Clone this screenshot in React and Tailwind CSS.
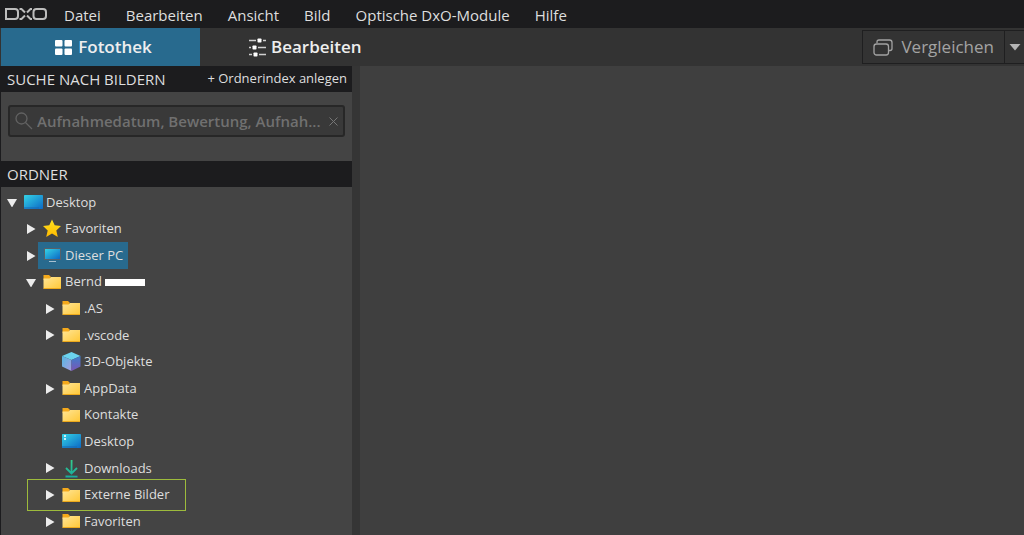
import React, { useState } from 'react';
import clsx from 'clsx';

const MENU = ['Datei', 'Bearbeiten', 'Ansicht', 'Bild', 'Optische DxO-Module', 'Hilfe'];

const FOLDERS = [
  { id: 'root', name: 'Desktop', icon: 'screen', level: 0, state: 'open' },
  { id: 'fav', name: 'Favoriten', icon: 'star', level: 1, state: 'closed' },
  { id: 'pc', name: 'Dieser PC', icon: 'pc', level: 1, state: 'closed' },
  { id: 'user', name: 'Bernd', icon: 'folder', level: 1, state: 'open', masked: true },
  { id: 'as', name: '.AS', icon: 'folder', level: 2, state: 'closed' },
  { id: 'vscode', name: '.vscode', icon: 'folder', level: 2, state: 'closed' },
  { id: '3d', name: '3D-Objekte', icon: 'cube', level: 2 },
  { id: 'appdata', name: 'AppData', icon: 'folder', level: 2, state: 'closed' },
  { id: 'contacts', name: 'Kontakte', icon: 'folder', level: 2 },
  { id: 'desktop', name: 'Desktop', icon: 'desktop', level: 2 },
  { id: 'downloads', name: 'Downloads', icon: 'download', level: 2, state: 'closed' },
  { id: 'external', name: 'Externe Bilder', icon: 'folder', level: 2, state: 'closed', marked: true },
  { id: 'userfav', name: 'Favoriten', icon: 'folder', level: 2, state: 'closed' },
];

const INDENT = ['pl-[6px]', 'pl-[25px]', 'pl-[44px]'];

const Logo = () => (
  <svg width="42" height="12" viewBox="0 0 42 12" fill="none" stroke="#bdbdbd" strokeWidth="2" aria-label="DxO">
    <path d="M1 1H10Q13 1 13 4V8Q13 11 10 11H1Z" />
    <path d="M14.500 1H16.500L20 4.500M14.500 11H16.500L20 7.500" />
    <path d="M27 1H25.500L22 4.500M27 11H25.500L22 7.500" />
    <rect x="28.500" y="1" width="12.500" height="10" rx="3" />
  </svg>
);

const Gradients = () => (
  <svg width="0" height="0" className="absolute" aria-hidden="true">
    <defs>
      <linearGradient id="screenFill" x1="0" y1="0" x2="1" y2="1">
        <stop offset="0" stopColor="#35d3e6" />
        <stop offset="1" stopColor="#0b68c4" />
      </linearGradient>
      <linearGradient id="folderFill" x1="0" y1="0" x2="1" y2="1">
        <stop offset="0" stopColor="#ffe596" />
        <stop offset="1" stopColor="#ffc838" />
      </linearGradient>
      <linearGradient id="starFill" x1="0" y1="0" x2="0" y2="1">
        <stop offset="0" stopColor="#ffe21f" />
        <stop offset="1" stopColor="#ffb900" />
      </linearGradient>
      <linearGradient id="cubeRight" x1="0" y1="0" x2="0" y2="1">
        <stop offset="0" stopColor="#3c80cc" />
        <stop offset="1" stopColor="#7b55b5" />
      </linearGradient>
      <linearGradient id="cubeLeft" x1="0" y1="0" x2="1" y2="1">
        <stop offset="0" stopColor="#55b8e2" />
        <stop offset="1" stopColor="#a79be0" />
      </linearGradient>
      <linearGradient id="downFill" gradientUnits="userSpaceOnUse" x1="0" y1="0" x2="0" y2="19">
        <stop offset="0" stopColor="#36d08c" />
        <stop offset="1" stopColor="#16a99f" />
      </linearGradient>
    </defs>
  </svg>
);

const ItemIcon = ({ type }) => (
  <svg width="19" height="19" viewBox="0 0 19 19" className="shrink-0" aria-hidden="true">
    {(type === 'screen' || type === 'desktop') && (
      <>
        <rect x="0" y="2" width="19" height="14" rx="0.7" fill="url(#screenFill)" />
        <path d="M0 15H15" stroke="#1765b3" />
        {type === 'desktop' && <path d="M2 4H4M2 7H4" stroke="#fff" strokeWidth="1.500" />}
      </>
    )}
    {type === 'star' && (
      <path
        d="M9 0.500L11.700 6.300L18 7L13.300 11.400L14.800 18L9 14.500L3.200 18L4.700 11.400L0 7L6.300 6.300Z"
        fill="url(#starFill)"
      />
    )}
    {type === 'pc' && (
      <>
        <rect x="1" y="2" width="17" height="12" fill="#57616a" />
        <rect x="2" y="3" width="15" height="10" fill="url(#screenFill)" />
        <path d="M6 15.500H13" stroke="#a8c1d1" />
      </>
    )}
    {type === 'folder' && (
      <>
        <path d="M0.500 2H6L7.500 3.500V7H0.500Z" fill="#f5a91b" />
        <path d="M0.500 5.500H6.500L8 4H18V15.500H0.500Z" fill="url(#folderFill)" />
        <path d="M0.500 15.500H18" stroke="#eda91c" />
      </>
    )}
    {type === 'cube' && (
      <>
        <path d="M9.500 0L18.500 4L9.500 8L0 4Z" fill="#6bd3ee" />
        <path d="M0 4L9.500 8V19L0 14.500Z" fill="url(#cubeLeft)" />
        <path d="M18.500 4L9.500 8V19L18.500 14.500Z" fill="url(#cubeRight)" />
      </>
    )}
    {type === 'download' && (
      <g fill="none" stroke="url(#downFill)" strokeWidth="1.800">
        <path d="M9.600 1L9.500 14.500M4 9L9.500 14.500L15 9" />
        <path d="M3.500 17.500L15.500 17.600" />
      </g>
    )}
  </svg>
);

const Arrow = ({ open }) => (
  <svg width="10" height="10" viewBox="0 0 10 10" fill="#ececec" aria-hidden="true">
    {open ? <path d="M0 2H10L5 10.500Z" /> : <path d="M1 0L9.500 5L1 10Z" />}
  </svg>
);

const FolderRow = ({ item, selected, onSelect }) => (
  <li className={clsx('relative flex min-h-6 max-h-7 flex-1 items-center', INDENT[item.level])}>
    {item.marked && (
      <span className="pointer-events-none absolute -inset-y-[3px] left-[26px] w-[159px] border border-[#9dbb3c]" />
    )}
    <span className="flex w-[12px] shrink-0 items-center">
      {item.state && (
        <button aria-label={`${item.name} umschalten`}>
          <Arrow open={item.state === 'open'} />
        </button>
      )}
    </span>
    <button
      onClick={() => onSelect(item.id)}
      className={clsx('flex h-full items-center gap-[3px] px-[5px] text-[13px]', selected && 'bg-[#286a8e]')}
    >
      <ItemIcon type={item.icon} />
      {item.name}
      {item.masked && <span className="h-[7px] w-10 bg-white" />}
    </button>
  </li>
);

export default function App() {
  const [selected, setSelected] = useState('pc');

  return (
    <div className="flex min-h-screen flex-col bg-[#353535] font-['Open_Sans','Noto_Sans',sans-serif] text-[#dedede]">
      <Gradients />
      <header className="flex h-7 items-center gap-[25px] bg-[#1c1c1e] pl-[5px] text-[15px] leading-5">
        <span className="-mr-2"><Logo /></span>
        {MENU.map(label => (
          <button key={label} className="whitespace-nowrap pt-0.5">{label}</button>
        ))}
      </header>

      <div className="flex h-[38px] items-stretch bg-[#333333]">
        <nav className="flex flex-1 text-[17px] font-semibold">
          <button className="ml-px flex w-[199px] items-center justify-center gap-1.5 bg-[#286a8e] pl-1.5 text-[#eeeeee]">
            <svg width="17" height="15" viewBox="0 0 17 15" fill="#fff" aria-hidden="true">
              <rect width="7.500" height="6.500" rx="1" />
              <rect x="9.500" width="7.500" height="6.500" rx="1" />
              <rect y="8.500" width="7.500" height="6.500" rx="1" />
              <rect x="9.500" y="8.500" width="7.500" height="6.500" rx="1" />
            </svg>
            Fotothek
          </button>
          <button className="flex items-center gap-1 pl-12 text-[#eeeeee]">
            <svg width="19" height="19" viewBox="0 0 19 19" aria-hidden="true">
              <path d="M1 2.500H18M1 9.500H18M1 16.500H18" stroke="#d0d0d0" strokeWidth="1.500" />
              <path d="M8 2.500H15M3 9.500H10M4 16.500H11" stroke="#333333" strokeWidth="3" />
              <rect x="9.500" y="0.500" width="4" height="4" rx="0.700" fill="#fff" />
              <rect x="4.500" y="7.500" width="4" height="4" rx="0.700" fill="#fff" />
              <rect x="5.500" y="14.500" width="4" height="4" rx="0.700" fill="#fff" />
            </svg>
            Bearbeiten
          </button>
        </nav>
        <div className="my-0.5 flex border border-r-0 border-[#1f1f20] text-[#a3a3a3]">
          <button className="flex items-center gap-2 border-r border-[#1f1f20] px-2.5 text-[17px]">
            <svg width="20" height="17" viewBox="0 0 20 17" fill="none" stroke="currentColor" strokeWidth="1.300" aria-hidden="true">
              <rect x="1" y="5" width="14.500" height="11" rx="2.500" />
              <path d="M4 4V3Q4 1 6 1H16.500Q19 1 19 3.500V9.500Q19 11.500 17 11.500H16" />
            </svg>
            Vergleichen
          </button>
          <button aria-label="Vergleichsoptionen" className="w-[19px] pl-1">
            <svg width="12" height="7" viewBox="0 0 12 7" fill="#b4b4b4" aria-hidden="true">
              <path d="M0.500 0H11.500L6 6.500Z" />
            </svg>
          </button>
        </div>
      </div>

      <div className="flex flex-1 gap-2">
        <aside className="flex w-[352px] shrink-0 flex-col border-l border-[#1c1c1e] bg-[#444444]">
          <div className="flex h-[26px] items-center justify-between bg-[#1c1c1e] pr-[5px] pl-1.5 text-[13px]">
            <h2 className="text-[15px]">SUCHE NACH BILDERN</h2>
            <button>+ Ordnerindex anlegen</button>
          </div>

          <div className="px-[7px] pt-[13px] pb-6">
            <label className="flex h-8 items-center gap-1 rounded-[3px] border-2 border-[#272727] bg-[#393939] px-[5px]">
              <svg width="18" height="18" viewBox="0 0 18 18" fill="none" stroke="#626262" strokeWidth="1.300" aria-hidden="true">
                <circle cx="6.500" cy="6.500" r="5.500" />
                <path d="M10.500 10.500L17 17" />
              </svg>
              <input
                aria-label="Suche nach Bildern"
                placeholder="Aufnahmedatum, Bewertung, Aufnah..."
                className="min-w-0 flex-1 text-[15px] font-semibold outline-none placeholder:text-[#707070]"
              />
              <button aria-label="Suche löschen">
                <svg width="9" height="9" viewBox="0 0 9 9" stroke="#777777" aria-hidden="true">
                  <path d="M0.500 0.500L8.500 8.500M8.500 0.500L0.500 8.500" />
                </svg>
              </button>
            </label>
          </div>

          <h2 className="flex h-[26px] items-center bg-[#1c1c1e] px-1.5 text-[15px]">ORDNER</h2>
          <ul className="flex flex-1 flex-col pt-0.5">
            {FOLDERS.map(item => (
              <FolderRow key={item.id} item={item} selected={selected === item.id} onSelect={setSelected} />
            ))}
          </ul>
        </aside>
        <main className="flex-1 bg-[#3f3f3f]" />
      </div>
    </div>
  );
}
